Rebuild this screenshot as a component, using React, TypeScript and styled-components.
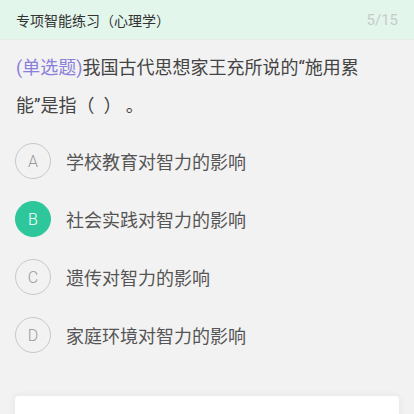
import styled, { createGlobalStyle } from "styled-components";

const GlobalStyle = createGlobalStyle`
  html, body {
    margin: 0;
    padding: 0;
    background: #f2f2f2;
    font-family: Roboto, "Noto Sans CJK SC", sans-serif;
  }
`

interface Option {
  key: string;
  text: string;
}

const options: Option[] = [
  { key: 'A', text: '学校教育对智力的影响' },
  { key: 'B', text: '社会实践对智力的影响' },
  { key: 'C', text: '遗传对智力的影响' },
  { key: 'D', text: '家庭环境对智力的影响' },
]

const selected = 'B'

export default function App() {
  return (
    <>
      <GlobalStyle />
      <Page>
        <Header>
          <HeaderTitle>专项智能练习（心理学）</HeaderTitle>
          <Progress>5/15</Progress>
        </Header>
        <Question>
          <QType>(单选题)</QType>我国古代思想家王充所说的“施用累能”是指（{'\u00a0\u00a0'}）{'\u00a0'}。
        </Question>
        <OptionList>
          {options.map((o) => (
            <OptionRow key={o.key}>
              <Badge $active={o.key === selected}>{o.key}</Badge>
              <OptionText>{o.text}</OptionText>
            </OptionRow>
          ))}
        </OptionList>
        <Card />
      </Page>
    </>
  )
}

const Page = styled.div`
  width: 414px;
  height: 414px;
  overflow: hidden;
  background: #f2f2f2;
`

const Header = styled.div`
  height: 39px;
  display: flex;
  align-items: center;
  justify-content: space-between;
  padding: 0 16px;
  background: #e3f6ec;
  border-bottom: 1px solid #e6ebe8;
`

const HeaderTitle = styled.div`
  font-size: 14px;
  color: #333;
`

const Progress = styled.div`
  font-size: 15px;
  color: #c6cac8;
`

const Question = styled.div`
  margin-top: 9px;
  padding: 0 16px;
  font-size: 18px;
  line-height: 38px;
  color: #444;
  height: 76px;
  padding-right: 50px;
`

const QType = styled.span`
  color: #8b7fdc;
`

const OptionList = styled.div`
  margin-top: 7px;
  display: flex;
  flex-direction: column;
`

const OptionRow = styled.div`
  height: 58px;
  display: flex;
  align-items: center;
  padding-left: 15px;
  gap: 15px;
`

const Badge = styled.div<{ $active: boolean }>`
  width: 36px;
  height: 36px;
  box-sizing: border-box;
  border-radius: 50%;
  display: flex;
  align-items: center;
  justify-content: center;
  font-size: 16px;
  font-weight: 300;
  border: 1px solid ${p => p.$active ? '#2ec79b' : '#c8c8c8'};
  background: ${p => p.$active ? '#2ec79b' : 'transparent'};
  color: ${p => p.$active ? '#fff' : '#999'};
`

const OptionText = styled.div`
  font-size: 18px;
  color: #555;
`

const Card = styled.div`
  margin: 32px 15px 0 15px;
  height: 60px;
  background: #fff;
  border-radius: 4px;
  box-shadow: 0 0 8px rgba(0, 0, 0, 0.06);
`
